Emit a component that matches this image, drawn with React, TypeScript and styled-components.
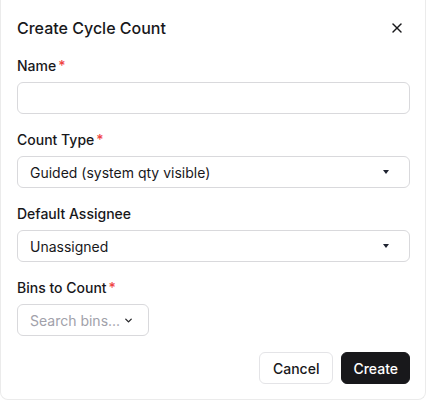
import React, { useState } from "react";
import styled, { createGlobalStyle } from "styled-components";

const GlobalStyle = createGlobalStyle`
  html, body {
    margin: 0;
    padding: 0;
    background: #ffffff;
  }
  body {
    font-family: Inter, "Noto Sans", "Liberation Sans", sans-serif;
    color: #18181b;
    -webkit-font-smoothing: antialiased;
  }
  * {
    box-sizing: border-box;
  }
`;

const Dialog = styled.div`
  width: 426px;
  height: 400px;
  background: #ffffff;
  border: 1px solid #ebebeb;
  border-top: none;
  border-radius: 0 0 8px 8px;
  padding: 16px;
  display: flex;
  flex-direction: column;
  gap: 16px;
`;

const Header = styled.div`
  display: flex;
  align-items: center;
  justify-content: space-between;
  height: 24px;
`;

const Title = styled.h2`
  margin: 0;
  font-size: 16px;
  font-weight: 500;
  line-height: 24px;
  color: #18181b;
`;

const CloseButton = styled.button`
  border: none;
  background: transparent;
  padding: 0;
  width: 24px;
  height: 24px;
  display: flex;
  align-items: center;
  justify-content: center;
  cursor: pointer;
  color: #18181b;
`;

const Field = styled.div`
  display: flex;
  flex-direction: column;
  gap: 6px;
`;

const Label = styled.label`
  font-size: 14px;
  font-weight: 500;
  line-height: 20px;
  color: #18181b;
  display: flex;
  align-items: center;
  gap: 2px;
`;

const Required = styled.span`
  color: #ef4444;
`;

const TextInput = styled.input`
  width: 393px;
  height: 32px;
  border: 1px solid #d9d9dc;
  border-radius: 6px;
  padding: 0 12px;
  font: inherit;
  font-size: 14px;
  outline: none;
`;

const SelectBox = styled.div`
  width: 393px;
  height: 32px;
  border: 1px solid #d9d9dc;
  border-radius: 6px;
  padding: 0 20px 0 12px;
  display: flex;
  align-items: center;
  justify-content: space-between;
  font-size: 14px;
  color: #18181b;
`;

const Caret = styled.span`
  width: 0;
  height: 0;
  border-left: 3.5px solid transparent;
  border-right: 3.5px solid transparent;
  border-top: 4px solid #1f2330;
`;

const SearchBox = styled.div`
  width: 132px;
  height: 32px;
  border: 1px solid #d9d9dc;
  border-radius: 6px;
  padding: 0 8px 0 12px;
  display: flex;
  align-items: center;
  gap: 3px;
  font-size: 14px;
  color: #a1a1aa;
  white-space: nowrap;
`;

const Footer = styled.div`
  display: flex;
  justify-content: flex-end;
  gap: 8px;
  margin-right: -1px;
`;

const Button = styled.button<{ $primary?: boolean }>`
  height: 32px;
  padding: 0 ${(p) => (p.$primary ? "11px" : "13px")};
  border-radius: 6px;
  font: inherit;
  font-size: 14px;
  font-weight: 500;
  cursor: pointer;
  border: 1px solid ${(p) => (p.$primary ? "#18181b" : "#e4e4e7")};
  background: ${(p) => (p.$primary ? "#18181b" : "#ffffff")};
  color: ${(p) => (p.$primary ? "#ffffff" : "#18181b")};
`;

function XIcon() {
  return (
    <svg width="16" height="16" viewBox="0 0 24 24" fill="none" stroke="currentColor" strokeWidth="2.2" strokeLinecap="round">
      <path d="M18 6 6 18" />
      <path d="m6 6 12 12" />
    </svg>
  );
}

function ChevronDown() {
  return (
    <svg width="11" height="11" viewBox="0 0 24 24" fill="none" stroke="#27272a" strokeWidth="3" strokeLinecap="round" strokeLinejoin="round" style={{ flexShrink: 0 }}>
      <path d="m6 9 6 6 6-6" />
    </svg>
  );
}

export default function App() {
  const [name, setName] = useState<string>("");

  return (
    <>
      <GlobalStyle />
      <Dialog>
        <Header>
          <Title>Create Cycle Count</Title>
          <CloseButton aria-label="Close">
            <XIcon />
          </CloseButton>
        </Header>

        <Field>
          <Label>
            Name<Required>*</Required>
          </Label>
          <TextInput value={name} onChange={(e) => setName(e.target.value)} />
        </Field>

        <Field>
          <Label>
            Count Type<Required>*</Required>
          </Label>
          <SelectBox>
            Guided (system qty visible)
            <Caret />
          </SelectBox>
        </Field>

        <Field>
          <Label>Default Assignee</Label>
          <SelectBox>
            Unassigned
            <Caret />
          </SelectBox>
        </Field>

        <Field>
          <Label>
            Bins to Count<Required>*</Required>
          </Label>
          <SearchBox>
            Search bins...
            <ChevronDown />
          </SearchBox>
        </Field>

        <Footer>
          <Button>Cancel</Button>
          <Button $primary>Create</Button>
        </Footer>
      </Dialog>
    </>
  );
}
